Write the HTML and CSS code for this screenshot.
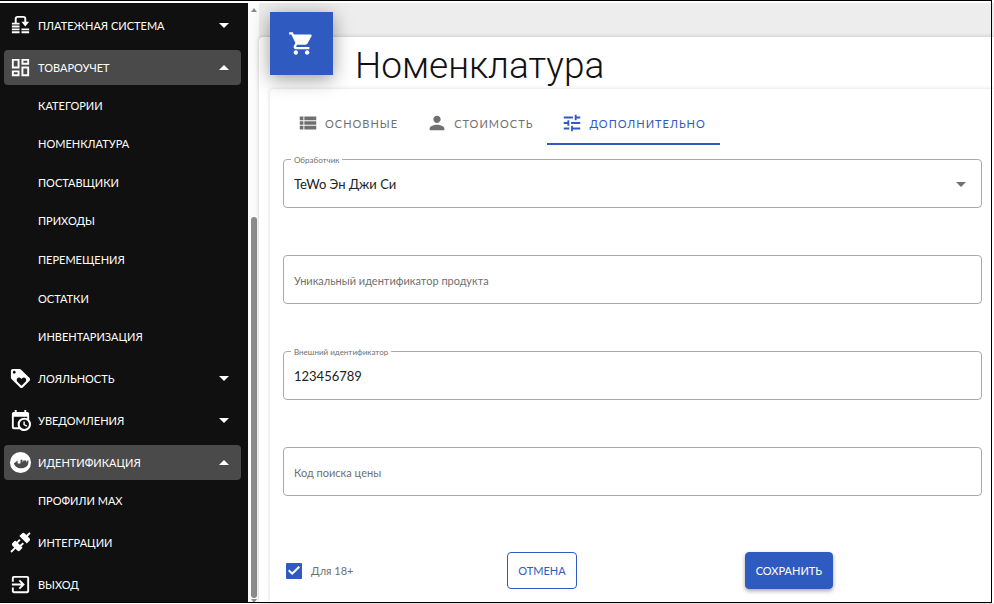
FILE: index.html
```html
<!DOCTYPE html>
<html lang="ru">
<head>
  <meta charset="UTF-8" />
  <meta name="viewport" content="width=device-width, initial-scale=1.0" />
  <title>Номенклатура</title>
  <link rel="stylesheet" href="styles.css">
</head>
<body>

  <div class="app">
    <nav class="sidebar">
      <ul class="menu">
        <li>
          <button class="menu-item">
            <svg class="icon" viewBox="0 0 24 24"><path d="M3 12h8v2H3zM3 15h8v2H3zM3 18h8v2H3zM13 15h8v2h-8zM13 18h8v2h-8zM3 9h3V5q0-3 3-3h6q3 0 3 3v3h3l-4 5-4-5h3V5q0-1-1-1H9Q8 4 8 5v4h3v2H3z"/></svg>
            <span>ПЛАТЕЖНАЯ СИСТЕМА</span>
            <svg class="arrow" viewBox="0 0 10 5"><path d="M0 0h10L5 5z"/></svg>
          </button>
        </li>
        <li>
          <button class="menu-item open">
            <svg class="icon" viewBox="0 0 24 24"><path d="M19 5v2h-4V5h4M9 5v6H5V5h4m10 8v6h-4v-6h4M9 17v2H5v-2h4M21 3h-8v6h8V3zM11 3H3v10h8V3zm10 8h-8v10h8V11zm-10 4H3v6h8v-6z"/></svg>
            <span>ТОВАРОУЧЕТ</span>
            <svg class="arrow" viewBox="0 0 10 5"><path d="M0 5h10L5 0z"/></svg>
          </button>
          <ul class="submenu goods">
            <li><a href="#">КАТЕГОРИИ</a></li>
            <li><a href="#">НОМЕНКЛАТУРА</a></li>
            <li><a href="#">ПОСТАВЩИКИ</a></li>
            <li><a href="#">ПРИХОДЫ</a></li>
            <li><a href="#">ПЕРЕМЕЩЕНИЯ</a></li>
            <li><a href="#">ОСТАТКИ</a></li>
            <li><a href="#">ИНВЕНТАРИЗАЦИЯ</a></li>
          </ul>
        </li>
        <li>
          <button class="menu-item">
            <svg class="icon" viewBox="0 0 24 24"><path d="M21.41 11.58l-9-9C12.05 2.22 11.55 2 11 2H4c-1.1 0-2 .9-2 2v7c0 .55.22 1.05.59 1.42l9 9c.36.36.86.58 1.41.58.55 0 1.05-.22 1.41-.59l7-7c.37-.36.59-.86.59-1.41 0-.55-.23-1.06-.59-1.42zM5.5 7C4.67 7 4 6.33 4 5.5S4.67 4 5.5 4 7 4.67 7 5.5 6.33 7 5.5 7zm11.77 8.27L13 19.54l-4.27-4.27C8.28 14.81 8 14.19 8 13.5c0-1.38 1.12-2.5 2.5-2.5.69 0 1.32.28 1.77.74l.73.72.73-.73c.45-.45 1.08-.73 1.77-.73 1.38 0 2.5 1.12 2.5 2.5 0 .69-.28 1.32-.73 1.77z"/></svg>
            <span>ЛОЯЛЬНОСТЬ</span>
            <svg class="arrow" viewBox="0 0 10 5"><path d="M0 0h10L5 5z"/></svg>
          </button>
        </li>
        <li>
          <button class="menu-item">
            <svg class="icon" viewBox="0 0 24 24"><path d="M15 13h1.500v2.820l2.440 1.410-.75 1.300L15 16.690V13m4-5H5v11h4.670c-.43-.91-.67-1.930-.67-3a7 7 0 0 1 7-7c1.070 0 2.090.24 3 .67V8M5 21a2 2 0 0 1-2-2V5c0-1.110.89-2 2-2h1V1h2v2h8V1h2v2h1a2 2 0 0 1 2 2v6.100c1.240 1.260 2 2.990 2 4.900a7 7 0 0 1-7 7c-1.910 0-3.640-.76-4.900-2H5m11-9.850A4.850 4.850 0 0 0 11.150 16c0 2.680 2.170 4.850 4.850 4.850A4.850 4.850 0 0 0 20.850 16c0-2.680-2.170-4.850-4.850-4.850z"/></svg>
            <span>УВЕДОМЛЕНИЯ</span>
            <svg class="arrow" viewBox="0 0 10 5"><path d="M0 0h10L5 5z"/></svg>
          </button>
        </li>
        <li>
          <button class="menu-item open">
            <svg class="icon" viewBox="0 0 24 24"><circle cx="12" cy="12" r="11"/><path class="cut" d="M5 13l4-3v3h3V9h2v3l1-2h3v2l2-3q1 5-2 7.500-3 2-7 1.500-4-.5-6-5z"/></svg>
            <span>ИДЕНТИФИКАЦИЯ</span>
            <svg class="arrow" viewBox="0 0 10 5"><path d="M0 5h10L5 0z"/></svg>
          </button>
          <ul class="submenu">
            <li><a href="#">ПРОФИЛИ MAX</a></li>
          </ul>
        </li>
        <li>
          <button class="menu-item">
            <svg class="icon" viewBox="0 0 24 24"><path d="M21.400 7.500c.8.800.8 2.100 0 2.800l-2.800 2.800-7.800-7.800 2.800-2.800c.8-.8 2.100-.8 2.800 0l1.800 1.800 3-3 1.400 1.400-3 3 1.800 1.800m-5.800 5.800l-1.400-1.400-2.800 2.800-2.100-2.100 2.800-2.800-1.400-1.400-2.800 2.800-1.500-1.400-2.800 2.800c-.8.800-.8 2.100 0 2.800l1.800 1.800-4 4 1.400 1.400 4-4 1.800 1.800c.8.800 2.100.8 2.800 0l2.800-2.800-1.400-1.400 2.800-2.900z"/></svg>
            <span>ИНТЕГРАЦИИ</span>
          </button>
        </li>
        <li>
          <button class="menu-item">
            <svg class="icon" viewBox="0 0 24 24"><path d="M10.090 15.590L11.500 17l5-5-5-5-1.410 1.410L12.670 11H3v2h9.670l-2.580 2.590zM19 3H5c-1.110 0-2 .9-2 2v4h2V5h14v14H5v-4H3v4c0 1.100.89 2 2 2h14c1.100 0 2-.9 2-2V5c0-1.100-.9-2-2-2z"/></svg>
            <span>ВЫХОД</span>
          </button>
        </li>
      </ul>
    </nav>

    <div class="scrollbar">
      <svg viewBox="0 0 6 4"><path d="M0 4h6L3 0z"/></svg>
      <div class="thumb"></div>
      <svg viewBox="0 0 6 4"><path d="M0 0h6L3 4z"/></svg>
    </div>

    <main class="content">
      <section class="page-card">
        <header class="page-header">
          <div class="badge">
            <svg viewBox="0 0 24 24"><path d="M7 18c-1.100 0-1.990.9-1.990 2S5.900 22 7 22s2-.9 2-2-.9-2-2-2zM1 2v2h2l3.600 7.590-1.350 2.450c-.16.280-.25.610-.25.960 0 1.100.9 2 2 2h12v-2H7.420c-.14 0-.25-.11-.25-.25l.03-.12.900-1.630h7.450c.75 0 1.410-.41 1.750-1.030l3.580-6.490c.08-.14.120-.31.120-.48 0-.55-.45-1-1-1H5.210l-.94-2H1zm16 16c-1.100 0-1.990.9-1.990 2s.89 2 1.990 2 2-.9 2-2-.9-2-2-2z"/></svg>
          </div>
          <h1>Номенклатура</h1>
        </header>

        <form class="form-card">
          <div class="tabs" role="tablist">
            <button type="button" class="tab" role="tab">
              <svg viewBox="0 0 24 24"><path d="M3 5h4v4H3zM8 5h13v4H8zM3 10h4v4H3zM8 10h13v4H8zM3 15h4v4H3zM8 15h13v4H8z"/></svg>
              ОСНОВНЫЕ
            </button>
            <button type="button" class="tab" role="tab">
              <svg viewBox="0 0 24 24"><path d="M12 12c2.210 0 4-1.790 4-4s-1.790-4-4-4-4 1.790-4 4 1.790 4 4 4zm0 2c-2.670 0-8 1.340-8 4v2h16v-2c0-2.660-5.330-4-8-4z"/></svg>
              СТОИМОСТЬ
            </button>
            <button type="button" class="tab active" role="tab" aria-selected="true">
              <svg viewBox="0 0 24 24"><path d="M3 17v2h6v-2H3zM3 5v2h10V5H3zm10 16v-2h8v-2h-8v-2h-2v6h2zM7 9v2H3v2h4v2h2V9H7zm14 4v-2H11v2h10zm-6-4h2V7h4V5h-4V3h-2v6z"/></svg>
              ДОПОЛНИТЕЛЬНО
            </button>
          </div>

          <div class="field">
            <label for="handler">Обработчик</label>
            <select id="handler">
              <option>TeWo Эн Джи Си</option>
            </select>
            <svg class="select-arrow" viewBox="0 0 10 5"><path d="M0 0h10L5 5z"/></svg>
          </div>
          <div class="field">
            <input type="text" id="uid" placeholder="Уникальный идентификатор продукта" aria-label="Уникальный идентификатор продукта">
          </div>
          <div class="field">
            <label for="extId">Внешний идентификатор</label>
            <input type="text" id="extId" value="123456789">
          </div>
          <div class="field">
            <input type="text" id="priceCode" placeholder="Код поиска цены" aria-label="Код поиска цены">
          </div>

          <div class="actions">
            <label class="check"><input type="checkbox" checked> Для 18+</label>
            <button type="button" class="btn outlined">ОТМЕНА</button>
            <button type="submit" class="btn filled">СОХРАНИТЬ</button>
          </div>
        </form>
      </section>
    </main>
  </div>

</body>
</html>
```

FILE: styles.css
```css
:root {
  --blue: #2f5bc0;
  --side: #101010;
  --side-open: #4a4a4a;
  --grey: #707070;
  --line: #aaaaaa;
}

* {
  box-sizing: border-box;
  font-family: 'Lato', 'Open Sans', sans-serif;
}

body {
  margin: 0;
  background: #fff;
}

/* thin black frame around the window */
body::after {
  content: '';
  position: fixed;
  inset: 0 2px 1px 0;
  border: 1px solid #000;
  border-left: none;
  pointer-events: none;
}

ul {
  list-style: none;
  margin: 0;
  padding: 0;
}

button { cursor: pointer; }

.app {
  display: grid;
  grid-template-columns: 248px 11px 1fr;
  min-height: 100vh;
  padding: 3px 0 1px;
}

/* sidebar */
.sidebar {
  background: var(--side);
  padding: 5px 7px 0 4px;
}

.menu-item {
  display: flex;
  align-items: center;
  gap: 6px;
  width: 100%;
  height: 35px;
  margin-bottom: 7px;
  padding: 0 12px 0 5px;
  border: none;
  border-radius: 4px;
  background: none;
  color: #fff;
  font-size: 11px;
  text-align: left;
}

.menu-item.open {
  background: var(--side-open);
  margin-bottom: 1px;
}

.menu > li:last-child .menu-item { margin-bottom: 0; }

.menu-item span { flex: 1; }
.icon { width: 23px; height: 23px; fill: #fff; }
.icon .cut { fill: var(--side-open); }
.arrow { width: 10px; height: 5px; fill: #fff; }

.submenu {
  display: grid;
  grid-auto-rows: 1fr;
  min-height: 39px;
  margin-bottom: 5px;
}

.submenu.goods { min-height: 270px; }

.submenu a {
  display: flex;
  align-items: center;
  height: 100%;
  padding-left: 34px;
  color: #fff;
  font-size: 11px;
  text-decoration: none;
}

.scrollbar {
  display: flex;
  flex-direction: column;
  align-items: center;
  background: #fcfcfc;
  padding-top: 5px;
}

.scrollbar svg { width: 6px; height: 4px; fill: #8b8b8b; }

.thumb {
  width: 6px;
  height: 64%;
  margin-top: auto;
  margin-bottom: 1px;
  border-radius: 3px;
  background: #8b8b8b;
}

/* content */
.content {
  display: flex;
  flex-direction: column;
  background: #ededed;
  padding-top: 34px;
}

.page-card {
  display: flex;
  flex-direction: column;
  flex: 1;
  padding-left: 11px;
  border-radius: 4px 0 0 0;
  background: #fff;
  box-shadow: 0 0 4px rgba(0,0,0,0.2);
}

.page-header {
  display: flex;
  align-items: flex-start;
  gap: 22px;
  height: 52px;
}

.badge {
  display: flex;
  align-items: center;
  justify-content: center;
  width: 63px;
  height: 63px;
  margin-top: -25px;
  background: var(--blue);
  box-shadow: 0 4px 18px rgba(0,0,0,0.4);
}

.badge svg { width: 27px; height: 27px; fill: #fff; }

.page-header h1 {
  margin: 6px 0 0;
  color: #111;
  font-family: 'Roboto', sans-serif;
  font-size: 37px;
  font-weight: 300;
  line-height: 46px;
}

.form-card {
  flex: 1;
  padding: 14px 12px 0 13px;
  border-radius: 4px 0 0 0;
  box-shadow: 0 0 4px rgba(0,0,0,0.15);
}

.tabs {
  display: flex;
  margin-bottom: 14px;
}

.tab {
  display: flex;
  align-items: center;
  gap: 6px;
  height: 42px;
  padding: 0 14px;
  border: none;
  border-bottom: 2px solid transparent;
  background: none;
  color: var(--grey);
  font-size: 11px;
  letter-spacing: 1px;
}

.tab svg { width: 22px; height: 22px; fill: currentColor; }

.tab.active {
  color: var(--blue);
  border-bottom-color: var(--blue);
}

.field {
  position: relative;
  margin-bottom: 47px;
}

.field label {
  position: absolute;
  top: -4px;
  left: 8px;
  padding: 0 3px;
  background: #fff;
  color: var(--grey);
  font-size: 8px;
  line-height: 10px;
}

.field input,
.field select {
  display: block;
  width: 100%;
  height: 49px;
  padding: 0 10px;
  border: 1px solid var(--line);
  border-radius: 4px;
  background: #fff;
  appearance: none;
  color: #222;
  font-size: 13px;
  outline: none;
}

.field input::placeholder {
  color: var(--grey);
  font-size: 11px;
  opacity: 1;
}

.select-arrow {
  position: absolute;
  top: 23px;
  right: 16px;
  width: 10px;
  height: 5px;
  fill: var(--grey);
}

.actions {
  display: grid;
  grid-template-columns: 1fr 1fr 1fr;
  align-items: center;
  margin: 56px 0 0 -13px;
}

.check {
  display: flex;
  align-items: center;
  gap: 9px;
  padding-left: 16px;
  color: var(--grey);
  font-size: 11px;
}

.check input {
  display: grid;
  place-content: center;
  width: 16px;
  height: 16px;
  margin: 0;
  border: 2px solid var(--grey);
  border-radius: 1px;
  appearance: none;
}

.check input:checked {
  border-color: var(--blue);
  background: var(--blue);
}

.check input:checked::before {
  content: '';
  width: 12px;
  height: 10px;
  background: #fff;
  clip-path: polygon(0 54%, 12% 40%, 35% 68%, 88% 6%, 100% 20%, 35% 96%);
}

.btn {
  justify-self: start;
  height: 37px;
  padding: 0 10px;
  border: 1px solid var(--blue);
  border-radius: 4px;
  font-size: 11px;
}

.outlined { background: #fff; color: var(--blue); }

.filled {
  background: var(--blue);
  color: #fff;
  box-shadow: 0 2px 4px rgba(0,0,0,0.35);
}
```
